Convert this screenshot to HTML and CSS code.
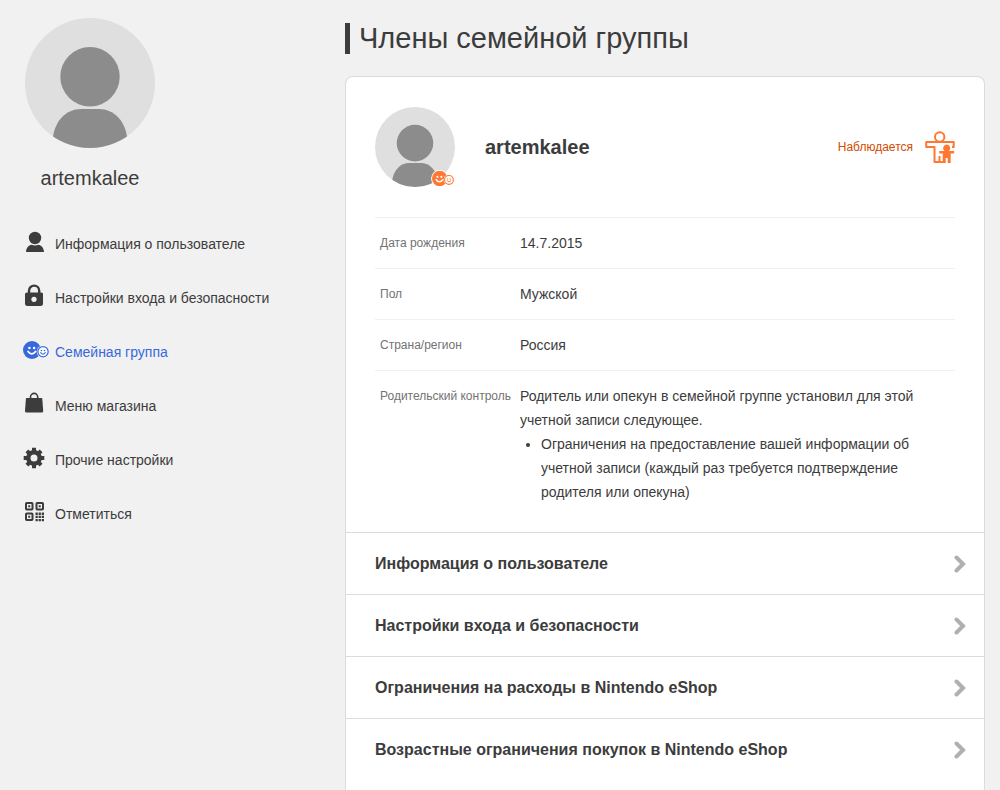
FILE: index.html
```html
<!DOCTYPE html>
<html lang="ru">
<head>
<meta charset="utf-8">
<title>Члены семейной группы</title>
<link rel="stylesheet" href="styles.css">
</head>
<body>
<svg class="defs" aria-hidden="true">
  <symbol id="avatar" viewBox="0 0 130 130">
    <clipPath id="disc"><circle cx="65" cy="65" r="65"/></clipPath>
    <circle cx="65" cy="65" r="65" fill="#dfdfdf"/>
    <g clip-path="url(#disc)" fill="#8c8c8c">
      <circle cx="65" cy="58.7" r="29.7"/>
      <path d="M28 119C30 103 41 91 56 91H74C89 91 100 103 102 119V130H28Z"/>
    </g>
  </symbol>
  <symbol id="faces" viewBox="0 0 26 18">
    <circle cx="9" cy="9" r="9" fill="currentColor"/>
    <circle class="halo" cx="20" cy="10.7" r="6.3"/>
    <circle cx="20" cy="10.7" r="5.8" fill="currentColor"/>
    <circle cx="20" cy="10.7" r="4.5" fill="#fff"/>
    <g fill="#fff"><circle cx="6.4" cy="7" r="1.3"/><circle cx="11.1" cy="7" r="1.3"/></g>
    <path d="M5 10.4Q8.8 15.4 12.6 10.4" fill="none" stroke="#fff" stroke-width="1.7" stroke-linecap="round"/>
    <g fill="currentColor"><circle cx="18.5" cy="9.5" r=".8"/><circle cx="21.5" cy="9.5" r=".8"/></g>
    <path d="M17.7 11.7Q20 14.7 22.3 11.7" fill="none" stroke="currentColor" stroke-width="1.1" stroke-linecap="round"/>
  </symbol>
  <symbol id="chevron" viewBox="0 0 12 18">
    <path d="M2.5 2.5 9 9 2.5 15.5" fill="none" stroke="#b0b0b0" stroke-width="4" stroke-linecap="round"/>
  </symbol>
</svg>

<div class="page">
  <aside class="sidebar">
    <div class="profile">
      <svg class="profile-avatar"><use href="#avatar"/></svg>
      <p class="profile-name">artemkalee</p>
    </div>
    <nav class="menu">
      <a class="menu-item" href="#user">
        <svg class="menu-icon" viewBox="0 0 26 24"><circle cx="12" cy="8" r="6.2"/><path d="M3 22C3.300 17.500 6 15.200 8.500 14.800Q12 16.200 15.500 14.800C18 15.200 20.700 17.500 21 22Z"/></svg>
        <span>Информация о пользователе</span>
      </a>
      <a class="menu-item" href="#security">
        <svg class="menu-icon" viewBox="0 0 26 24"><path d="M6 9.500V6.700a5.100 5.100 0 0 1 10.200 0V9.500" fill="none" stroke="currentColor" stroke-width="2.400"/><path fill-rule="evenodd" d="M4 8.500H18.500Q20 8.500 20 10V20Q20 22 17.500 22H4.500Q2 22 2 20V10Q2 8.500 4 8.500ZM11 12.700a2.700 2.700 0 1 0 .01 0Z"/></svg>
        <span>Настройки входа и безопасности</span>
      </a>
      <a class="menu-item menu-item-active" href="#family" aria-current="page">
        <svg class="menu-icon" viewBox="0 -3 26 24"><use href="#faces" width="26" height="18"/></svg>
        <span>Семейная группа</span>
      </a>
      <a class="menu-item" href="#shop">
        <svg class="menu-icon" viewBox="0 0 26 24"><path d="M7.500 8V5a3.600 3.600 0 0 1 7.200 0V8" fill="none" stroke="currentColor" stroke-width="1.600"/><path d="M3.500 6H18.700Q19.200 6 19.300 6.800L20.200 19Q20.200 20.500 18.800 20.500H3.400Q2 20.500 2 19L2.900 6.800Q3 6 3.500 6Z"/></svg>
        <span>Меню магазина</span>
      </a>
      <a class="menu-item" href="#other">
        <svg class="menu-icon" viewBox="0 0 26 24"><g fill="none" stroke="currentColor"><circle cx="11" cy="12" r="5.700" stroke-width="4.400"/><path stroke-width="4" d="M11 5V1.700M11 19v3.300M4 12H.7M18 12h3.300M6 7 3.900 4.900M16 7l2.100-2.100M6 17l-2.100 2.100M16 17l2.100 2.100"/></g></svg>
        <span>Прочие настройки</span>
      </a>
      <a class="menu-item" href="#checkin">
        <svg class="menu-icon" viewBox="0 0 26 24"><g fill="none" stroke="currentColor" stroke-width="2"><rect x="3" y="3" width="6.500" height="6.500" rx=".7"/><rect x="13.500" y="3" width="6.500" height="6.500" rx=".7"/><rect x="3" y="13.500" width="6.500" height="6.500" rx=".7"/><path stroke-width="2.400" d="M12.500 13.700H21M12.500 16.900H21M12.500 20.100H21" stroke-dasharray="2.300 .8"/></g><path d="M5.200 5.200h2v2h-2zM15.700 5.200h2v2h-2zM5.200 15.700h2v2h-2z"/></svg>
        <span>Отметиться</span>
      </a>
    </nav>
  </aside>

  <main class="main">
    <h1 class="title">Члены семейной группы</h1>
    <section class="card">
      <div class="details">
        <header class="member">
          <div class="member-picture">
            <svg class="member-avatar"><use href="#avatar"/></svg>
            <svg class="member-badge" viewBox="-1 -1 28 20"><circle cx="9" cy="9" r="10" fill="#fff"/><use href="#faces" width="26" height="18"/></svg>
          </div>
          <h2 class="member-name">artemkalee</h2>
          <span class="status">Наблюдается</span>
          <svg class="status-icon" viewBox="0 0 30 32">
            <g fill="none" stroke="#ff7832" stroke-width="2" stroke-linejoin="round">
              <circle cx="14.700" cy="6" r="4.700"/>
              <path d="M18 31H9.500V16H1.200V11H28.700V16H27M14.500 25V31"/>
            </g>
            <path fill="#ff7832" d="M21.700 13.600a3.600 3.600 0 1 1-.01 0ZM14.200 20H29.200V22.500H25.700V32H22.700V27H20.700V32H17.700V22.500H14.200Z"/>
          </svg>
        </header>
        <dl class="facts">
          <div class="fact"><dt>Дата рождения</dt><dd>14.7.2015</dd></div>
          <div class="fact"><dt>Пол</dt><dd>Мужской</dd></div>
          <div class="fact"><dt>Страна/регион</dt><dd>Россия</dd></div>
          <div class="fact">
            <dt>Родительский контроль</dt>
            <dd>Родитель или опекун в семейной группе установил для этой учетной записи следующее.
              <ul class="limits"><li>Ограничения на предоставление вашей информации об учетной записи (каждый раз требуется подтверждение родителя или опекуна)</li></ul>
            </dd>
          </div>
        </dl>
      </div>
      <nav class="links">
        <a class="link" href="#member-user">Информация о пользователе<svg class="chevron"><use href="#chevron"/></svg></a>
        <a class="link" href="#member-security">Настройки входа и безопасности<svg class="chevron"><use href="#chevron"/></svg></a>
        <a class="link" href="#member-spending">Ограничения на расходы в Nintendo eShop<svg class="chevron"><use href="#chevron"/></svg></a>
        <a class="link" href="#member-age">Возрастные ограничения покупок в Nintendo eShop<svg class="chevron"><use href="#chevron"/></svg></a>
      </nav>
    </section>
  </main>
</div>
</body>
</html>
```
FILE: styles.css
```css
* { box-sizing: border-box; }

body {
  margin: 0;
  background: #f1f1f1;
  color: #3c3c3c;
  font: 14px/24px "Liberation Sans", Arial, sans-serif;
}

h1, h2, p, dl, dd, ul { margin: 0; }
a { color: inherit; text-decoration: none; }
svg { display: block; flex-shrink: 0; }
.defs { position: absolute; width: 0; height: 0; }

.page {
  display: grid;
  grid-template-columns: 320px minmax(0, 1fr);
  gap: 25px;
  min-height: 100vh;
  padding-right: 15px;
}

.sidebar { padding: 18px 0 0 23px; }
.profile { width: 134px; }
.profile-avatar { width: 130px; height: 130px; margin: 0 auto; }
.profile-name {
  margin-top: 15px;
  font-size: 20px;
  line-height: 30px;
  text-align: center;
}
.menu { margin-top: 24px; }
.menu-item {
  display: flex;
  align-items: center;
  gap: 6px;
  height: 54px;
}
.menu-icon {
  width: 26px;
  height: 24px;
  margin-bottom: 4px;
  fill: currentColor;
}
.menu-item-active { color: #3769dc; }
.halo { fill: #fff; }

.main {
  display: flex;
  flex-direction: column;
  padding-top: 23px;
}
.title {
  padding-left: 9px;
  border-left: 5px solid #3c3c3c;
  font-size: 29px;
  font-weight: 400;
  line-height: 31px;
}
.card {
  flex: 1;
  margin-top: 22px;
  border: 1px solid #dcdcdc;
  border-bottom: 0;
  border-radius: 8px 8px 0 0;
  background: #fff;
}
.details { padding: 30px 29px 28px; }

.member {
  display: flex;
  align-items: center;
  padding-bottom: 30px;
}
.member-picture { position: relative; }
.member-avatar { width: 80px; height: 80px; }
.member-badge {
  position: absolute;
  right: 0;
  bottom: 0;
  width: 24px;
  height: 17px;
  color: #ff7832;
}
.member-name {
  flex: 1;
  margin-left: 30px;
  font-size: 20px;
}
.status {
  color: #d24a00;
  font-size: 12px;
}
.status-icon {
  width: 30px;
  height: 32px;
  margin-left: 12px;
}

.fact {
  display: grid;
  grid-template-columns: 140px minmax(0, 1fr);
  padding: 13px 5px;
  border-top: 1px solid #f0f0f0;
}
.fact:last-child { padding: 13px 0 0 5px; }
.fact dt {
  color: #737373;
  font-size: 12px;
  white-space: nowrap;
}
.limits { padding-left: 21px; }

.link {
  display: flex;
  align-items: center;
  justify-content: space-between;
  height: 62px;
  padding: 0 18px 0 29px;
  border-top: 1px solid #dcdcdc;
  font-size: 16px;
  font-weight: 700;
}
.chevron { width: 12px; height: 18px; }
```
